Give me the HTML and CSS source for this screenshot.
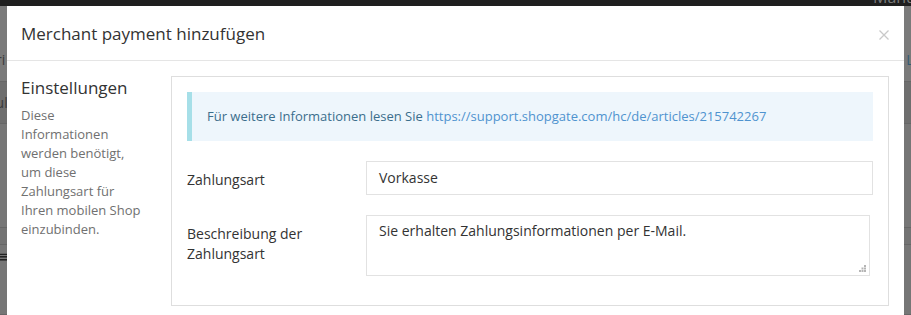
FILE: index.html
```html
<!DOCTYPE html>
<html lang="de">
<head>
<meta charset="utf-8">
<title>Merchant payment hinzufügen</title>
<link rel="stylesheet" href="styles.css">
</head>
<body>
<div class="page">
  <div class="topbar"><span class="user">Manuel</span></div>
  <div class="page-row r1"><span class="frag-l">Bri</span><span class="frag-r">Link</span></div>
  <div class="page-row r2"><span class="frag-l">Kul</span></div>
  <div class="page-row r3"></div>
  <div class="page-row r4"></div>
  <div class="page-row r5"><span class="frag-l menu">≡</span></div>
</div>

<div class="backdrop">
  <div class="modal">
    <div class="modal-header">
      <h4 class="modal-title">Merchant payment hinzufügen</h4>
      <span class="close" aria-label="Schließen">
        <svg width="10" height="10" viewBox="0 0 10 10"><path d="M0.5 0.5 L9.5 9.5 M9.5 0.5 L0.5 9.5" stroke="#c9c9c9" stroke-width="1.3" fill="none"/></svg>
      </span>
    </div>
    <div class="modal-body">
      <div class="side">
        <h3 class="side-title">Einstellungen</h3>
        <p class="side-text">Diese Informationen werden benötigt, um diese Zahlungsart für Ihren mobilen Shop einzubinden.</p>
      </div>
      <div class="panel">
        <div class="alert">Für weitere Informationen lesen Sie <a class="alert-link" href="#">https://support.shopgate.com/hc/de/articles/215742267</a></div>
        <div class="form-row">
          <label class="form-label">Zahlungsart</label>
          <div class="input">Vorkasse</div>
        </div>
        <div class="form-row">
          <label class="form-label">Beschreibung der Zahlungsart</label>
          <div class="textarea">Sie erhalten Zahlungsinformationen per E-Mail.
            <svg class="grip" width="7" height="7" viewBox="0 0 7 7"><g fill="#b5b5b5"><rect x="5" y="0" width="2" height="2"/><rect x="2.5" y="2.5" width="2" height="2"/><rect x="5" y="2.5" width="2" height="2"/><rect x="0" y="5" width="2" height="2"/><rect x="2.5" y="5" width="2" height="2"/><rect x="5" y="5" width="2" height="2"/></g></svg>
          </div>
        </div>
      </div>
    </div>
  </div>
</div>
</body>
</html>
```

FILE: styles.css
```css
* { box-sizing: border-box; }
html, body { margin: 0; padding: 0; }
body {
  width: 911px;
  height: 315px;
  overflow: hidden;
  background: #767676;
  font-family: "Open Sans", "DejaVu Sans", sans-serif;
  color: #333;
}

/* page behind the backdrop */
.page { width: 911px; height: 315px; }
.topbar {
  height: 6px;
  background: #1f1f1f;
  position: relative;
  overflow: hidden;
}
.user {
  position: absolute;
  left: 873px;
  top: -14px;
  font-size: 16px;
  color: #7a7a7a;
}
.page-row {
  display: flex;
  justify-content: space-between;
  border-bottom: 1px solid #666;
  color: #3a3a3a;
  font-size: 14px;
}
.r1 { height: 76px; align-items: flex-end; padding-bottom: 12px; background: #7a7a7a; }
.r2 { height: 42px; background: #6e6e6e; align-items: center; }
.r3 { height: 104px; background: #767676; }
.r4 { height: 17px; background: #737373; }
.r5 { height: 70px; background: #767676; align-items: flex-start; }
.frag-l { margin-left: -13px; }
.frag-r { margin-right: -22px; color: #345a73; }
.menu { margin-left: -3px; font-size: 16px; color: #222; }

/* modal */
.backdrop {
  position: fixed;
  inset: 0;
  padding: 6px 7px 0 7px;
}
.modal {
  width: 897px;
  height: 400px;
  background: #fff;
}
.modal-header {
  display: flex;
  align-items: center;
  justify-content: space-between;
  height: 55px;
  padding: 0 14px 0 14px;
  border-bottom: 1px solid #e5e5e5;
}
.modal-title {
  margin: 0;
  font-size: 17px;
  font-weight: 400;
  line-height: 25px;
  color: #333;
  padding-top: 1px;
}
.close {
  display: flex;
  width: 10px;
  height: 10px;
  margin-right: 1px;
  margin-top: 3px;
}

.modal-body {
  display: flex;
  padding: 15px 15px 0 14px;
}
.side {
  width: 135px;
  flex: none;
  margin-right: 15px;
  padding-right: 13px;
}
.side-title {
  margin: 0 0 6px 0;
  font-size: 17px;
  font-weight: 400;
  line-height: 24px;
  color: #333;
}
.side-text {
  margin: 0;
  font-size: 13px;
  line-height: 19px;
  color: #707070;
}

.panel {
  flex: 1;
  border: 1px solid #dedede;
  padding: 15px 15px 0 15px;
  height: 230px;
}
.alert {
  background: #eef6fc;
  border-left: 5px solid #a6dfe8;
  padding: 15px 15px 15px 15px;
  font-size: 13px;
  line-height: 19px;
  color: #3b6e8c;
}
.alert-link { color: #4f93cf; text-decoration: none; }

.form-row {
  display: flex;
  margin-top: 20px;
}
.form-label {
  width: 179px;
  flex: none;
  font-size: 14px;
  line-height: 20px;
  color: #333;
  padding-top: 9px;
}
.input {
  flex: 1;
  height: 34px;
  border: 1px solid #e2e2e2;
  padding: 5px 12px;
  font-size: 14px;
  line-height: 22px;
  color: #333;
}
.textarea {
  position: relative;
  flex: none;
  width: 504px;
  height: 61px;
  border: 1px solid #e2e2e2;
  padding: 5px 12px;
  font-size: 14px;
  line-height: 20px;
  color: #333;
}
.grip {
  position: absolute;
  right: 3px;
  bottom: 3px;
}
```
